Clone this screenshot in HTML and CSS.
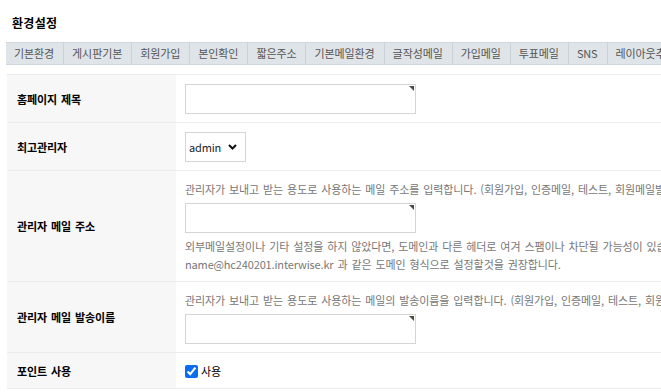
FILE: index.html
```html
<!DOCTYPE html>
<html lang="ko">
<head>
    <meta charset="UTF-8">
    <meta name="viewport" content="width=device-width, initial-scale=1.0">
    <title>환경설정</title>
    <link rel="stylesheet" href="styles.css">
</head>
<body>
    <h1 class="page-title">환경설정</h1>

    <ul class="tabs">
        <li>기본환경</li>
        <li>게시판기본</li>
        <li>회원가입</li>
        <li>본인확인</li>
        <li>짧은주소</li>
        <li>기본메일환경</li>
        <li>글작성메일</li>
        <li>가입메일</li>
        <li>투표메일</li>
        <li class="en">SNS</li>
        <li>레이아웃추가설정</li>
        <li>기타설정</li>
    </ul>

    <table class="frm-table">
        <tr>
            <th>홈페이지 제목</th>
            <td><span class="field"><input type="text" class="frm-input"></span></td>
        </tr>
        <tr>
            <th>최고관리자</th>
            <td>
                <span class="select-wrap">
                    <select class="frm-select"><option>admin</option></select>
                    <svg class="chevron" width="9" height="6" viewBox="0 0 9 6"><path d="M1 1l3.5 3.5L8 1" fill="none" stroke="#111" stroke-width="2"/></svg>
                </span>
            </td>
        </tr>
        <tr>
            <th>관리자 메일 주소</th>
            <td>
                <p class="help">관리자가 보내고 받는 용도로 사용하는 메일 주소를 입력합니다. (회원가입, 인증메일, 테스트, 회원메일발송 등에서 사용)</p>
                <span class="field field-gap"><input type="text" class="frm-input"></span>
                <p class="help help-after">외부메일설정이나 기타 설정을 하지 않았다면, 도메인과 다른 헤더로 여겨 스팸이나 차단될 가능성이 있습니다.<br><span class="en">name@hc240201.interwise.kr</span> 과 같은 도메인 형식으로 설정할것을 권장합니다.</p>
            </td>
        </tr>
        <tr>
            <th>관리자 메일 발송이름</th>
            <td>
                <p class="help">관리자가 보내고 받는 용도로 사용하는 메일의 발송이름을 입력합니다. (회원가입, 인증메일, 테스트, 회원메일발송 등에서 사용)</p>
                <span class="field field-gap"><input type="text" class="frm-input"></span>
            </td>
        </tr>
        <tr>
            <th>포인트 사용</th>
            <td><label class="check"><input type="checkbox" checked> 사용</label></td>
        </tr>
    </table>
</body>
</html>
```

FILE: styles.css
```css
html,
body {
    overflow: hidden;
}

body {
    margin: 0;
    font-family: "Noto Sans CJK KR", "Noto Sans", sans-serif;
    font-size: 11px;
    letter-spacing: -0.1px;
    word-spacing: 1px;
    color: #000;
    background-color: #fff;
}

.en {
    letter-spacing: -0.15px;
    word-spacing: 0;
}

.page-title {
    margin: 0 0 10px;
    padding: 14px 0 0 12px;
    font-size: 12px;
    letter-spacing: 0.3px;
    line-height: 18px;
    font-weight: bold;
}

.tabs {
    display: flex;
    width: 1000px;
    margin: 0 0 0 6px;
    padding: 0;
    list-style: none;
    background-color: #dfe4e8;
    border-top: 1px solid #d0d7dc;
    border-bottom: 1px solid #d0d7dc;
}

.tabs li {
    flex: none;
    padding: 0 9px 0 8px;
    line-height: 21px;
    color: #555;
    border-right: 1px solid #cbd2d7;
    white-space: nowrap;
}

.frm-table {
    width: 1000px;
    margin: 9px 0 0 7px;
    border-collapse: collapse;
    table-layout: fixed;
    border-top: 1px solid #ececec;
}

.frm-table th {
    width: 159px;
    padding: 0 0 0 10px;
    text-align: left;
    font-weight: bold;
    background-color: #f7f7f7;
    border-bottom: 1px solid #ececec;
}

.frm-table td {
    padding: 9px 9px 8px;
    border-bottom: 1px solid #ececec;
    vertical-align: top;
}

.help {
    margin: 0;
    line-height: 18px;
    color: #777;
    white-space: nowrap;
}

.help-after {
    margin-top: 4px;
}

.field {
    position: relative;
    display: block;
    width: 231px;
}

.field-gap {
    margin-top: 5px;
}

.field::after {
    content: "";
    position: absolute;
    top: 2px;
    right: 2px;
    border-style: solid;
    border-width: 0 5px 5px 0;
    border-color: transparent #4a4a40 transparent transparent;
}

.frm-input {
    display: block;
    width: 231px;
    height: 30px;
    margin: 0;
    padding: 0 5px;
    border: 1px solid #d5d5d5;
    box-sizing: border-box;
    font: inherit;
}

.select-wrap {
    position: relative;
    display: inline-block;
}

.frm-select {
    display: block;
    width: 61px;
    height: 30px;
    margin: 0;
    padding: 0 0 0 3px;
    border: 1px solid #d5d5d5;
    border-radius: 0;
    background-color: #fff;
    appearance: none;
    -webkit-appearance: none;
    font: inherit;
    letter-spacing: -0.15px;
    color: #222;
}

.chevron {
    position: absolute;
    top: 12px;
    right: 9px;
    pointer-events: none;
}

.check {
    display: flex;
    align-items: center;
    line-height: 18px;
}

.check input {
    width: 13px;
    height: 13px;
    margin: 0 3px 0 0;
    accent-color: #0a6cf0;
}
```
